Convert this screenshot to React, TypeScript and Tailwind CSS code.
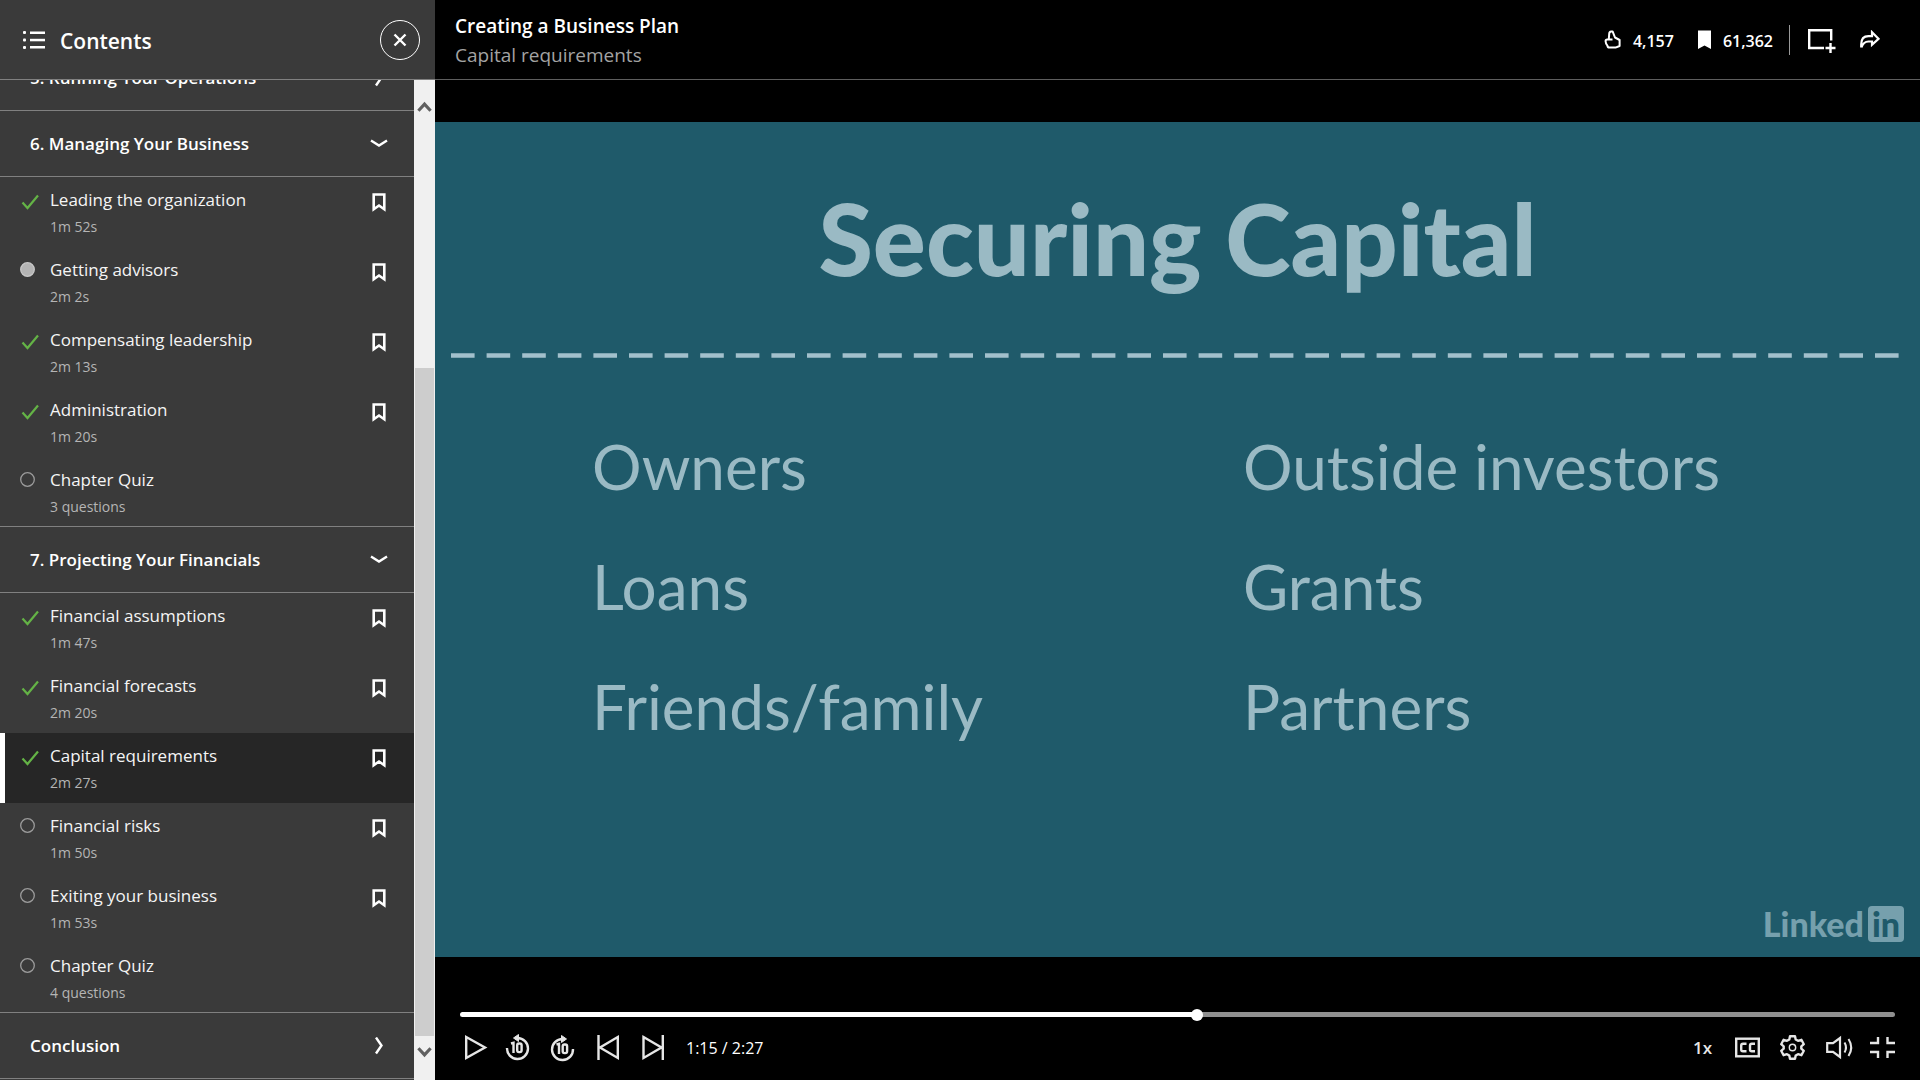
import React, { useState } from "react";

type Status = "done" | "partial" | "none";
type Item = { title: string; meta: string; status: Status; quiz?: boolean };
type Chapter = { title: string; items: Item[] };

const chapters: Chapter[] = [
  { title: "5. Running Your Operations", items: [] },
  {
    title: "6. Managing Your Business",
    items: [
      { title: "Leading the organization", meta: "1m 52s", status: "done" },
      { title: "Getting advisors", meta: "2m 2s", status: "partial" },
      { title: "Compensating leadership", meta: "2m 13s", status: "done" },
      { title: "Administration", meta: "1m 20s", status: "done" },
      { title: "Chapter Quiz", meta: "3 questions", status: "none", quiz: true },
    ],
  },
  {
    title: "7. Projecting Your Financials",
    items: [
      { title: "Financial assumptions", meta: "1m 47s", status: "done" },
      { title: "Financial forecasts", meta: "2m 20s", status: "done" },
      { title: "Capital requirements", meta: "2m 27s", status: "done" },
      { title: "Financial risks", meta: "1m 50s", status: "none" },
      { title: "Exiting your business", meta: "1m 53s", status: "none" },
      { title: "Chapter Quiz", meta: "4 questions", status: "none", quiz: true },
    ],
  },
  { title: "Conclusion", items: [] },
];

function StatusMark({ status }: { status: Status }) {
  return (
    <svg width="50" height="40" viewBox="0 0 50 40" fill="none" className="shrink-0" aria-hidden="true">
      {status === "done" ? (
        <path d="M22.5 25.5 L27.5 31 L38 18.5" stroke="#64b346" strokeWidth="2.2" />
      ) : (
        <circle
          cx="27.5"
          cy="22.5"
          r="6.8"
          stroke={status === "partial" ? "#c8c8c8" : "#9c9c9c"}
          strokeWidth="1.3"
          fill={status === "partial" ? "#b4b4b4" : "none"}
        />
      )}
    </svg>
  );
}

function Row({ item }: { item: Item }) {
  const current = item.title === "Capital requirements";
  return (
    <li
      className={
        current
          ? "flex h-[70px] items-start bg-[#262626] shadow-[inset_5px_0_0_#fff] last:h-[69px]"
          : "flex h-[70px] items-start last:h-[69px]"
      }
    >
      <StatusMark status={item.status} />
      <a href="#lesson" className="min-w-0 flex-1 pt-[11px]">
        <span className="block text-[17px] leading-6 text-[#f5f5f5]">{item.title}</span>
        <span className="block pt-[3px] text-sm leading-6 text-[#b5b5b5]">{item.meta}</span>
      </a>
      {!item.quiz && (
        <button type="button" aria-label={"Save " + item.title} className="pt-4 pr-7">
          <svg width="14" height="19" viewBox="0 0 14 19" fill="none">
            <path d="M1.7 1.5 H12.3 V16.2 L7 12.5 L1.7 16.2 Z" stroke="#fff" strokeWidth="2.6" />
          </svg>
        </button>
      )}
    </li>
  );
}

function ChapterBlock({ chapter }: { chapter: Chapter }) {
  const open = chapter.items.length > 0;
  return (
    <section>
      <button
        type="button"
        aria-expanded={open}
        className="flex h-[66px] w-full items-center justify-between border-b border-[#808080] pr-[26px] pl-[30px] text-left"
      >
        <span className="text-[17px] leading-6 font-semibold">{chapter.title}</span>
        <svg width="18" height="18" viewBox="0 0 18 18" fill="none" stroke="#fff" strokeWidth="2.4">
          {open ? <path d="M1 5.5 L9 10.5 L17 5.5" /> : <path d="M6 0.5 L11.5 8.5 L6 16.5" />}
        </svg>
      </button>
      {open && (
        <ul className="border-b border-[#808080]">
          {chapter.items.map((it) => (
            <Row key={it.title} item={it} />
          ))}
        </ul>
      )}
    </section>
  );
}

function Scrollbar() {
  return (
    <div className="flex w-[21px] shrink-0 flex-col bg-[#f0f0f0] px-px pb-3">
      <button type="button" aria-label="Scroll up" className="flex h-[54px] items-center justify-center">
        <svg width="15" height="14" viewBox="0 0 16 14" fill="none" stroke="#606060" strokeWidth="3.4">
          <path d="M1.5 11 L8 4 L14.5 11" />
        </svg>
      </button>
      <div className="flex-[234]" />
      <div className="flex-[668] bg-[#cdcdcd]" />
      <button type="button" aria-label="Scroll down" className="flex h-8 items-center justify-center">
        <svg width="15" height="14" viewBox="0 0 16 14" fill="none" stroke="#606060" strokeWidth="3.4">
          <path d="M1.5 3 L8 10 L14.5 3" />
        </svg>
      </button>
    </div>
  );
}

function Sidebar() {
  return (
    <aside className="flex h-screen w-[435px] shrink-0 flex-col bg-[#3a3a3a]">
      <header className="flex h-20 shrink-0 items-center border-b border-[#808080] pr-[15px] pl-[23px]">
        <svg width="22" height="20" viewBox="0 0 22 20" aria-hidden="true" fill="#fff">
          <rect x="0" y="1" width="3" height="3" rx="1" />
          <rect x="0" y="8.5" width="3" height="3" rx="1" />
          <rect x="0" y="16" width="3" height="3" rx="1" />
          <rect x="7" y="1.5" width="15" height="2.5" />
          <rect x="7" y="8.8" width="15" height="2.5" />
          <rect x="7" y="16" width="15" height="2.5" />
        </svg>
        <h2 className="flex-1 pt-0.5 pl-[15px] text-[21px] leading-7 font-semibold">Contents</h2>
        <button
          type="button"
          aria-label="Close contents"
          className="flex size-10 items-center justify-center rounded-full border border-white"
        >
          <svg width="14" height="14" viewBox="0 0 14 14" stroke="#fff" strokeWidth="2.4">
            <path d="M1.5 1.5 L12.5 12.5 M12.5 1.5 L1.5 12.5" />
          </svg>
        </button>
      </header>
      <div className="flex min-h-0 flex-1">
        <nav aria-label="Course contents" className="min-w-0 flex-1 overflow-hidden">
          <div className="-mt-[35px]">
            {chapters.map((c) => (
              <ChapterBlock key={c.title} chapter={c} />
            ))}
          </div>
        </nav>
        <Scrollbar />
      </div>
    </aside>
  );
}

function TopBar() {
  return (
    <header className="flex h-20 shrink-0 items-center border-b border-[#5e5e5e] pr-10 pl-5">
      <div className="flex-1 pt-0.5">
        <h1 className="text-[19px] leading-7 font-semibold">Creating a Business Plan</h1>
        <p className="text-[19px] leading-[30px] text-[#a3a3a3]">Capital requirements</p>
      </div>
      <button type="button" aria-label="Like, 4,157" className="flex items-center gap-3">
        <svg width="17" height="19" viewBox="0 0 17 19" fill="none" stroke="#fff" strokeWidth="2" strokeLinejoin="round">
          <path d="M4.8 9.5 L5.2 3.8 Q5.2 1.5 7.2 1.4 H8.6 L11 7.5 L15.6 10 V16 L11.5 17.6 H5.5 Q3.6 17.6 3.4 15.6 Q1.7 13.8 1.6 11.3 Q1.5 9.6 3.2 9.6 H8.5" />
        </svg>
        <span className="pt-0.5 text-base leading-6 font-semibold">4,157</span>
      </button>
      <button type="button" aria-label="Save, 61,362" className="ml-6 flex items-center gap-3">
        <svg width="13" height="19" viewBox="0 0 13 19" fill="#fff">
          <path d="M0 0.5 H13 V19 L6.5 15.5 L0 19 Z" />
        </svg>
        <span className="pt-0.5 text-base leading-6 font-semibold">61,362</span>
      </button>
      <div className="ml-4 h-[30px] w-px bg-[#9a9a9a]" />
      <button type="button" aria-label="Add to collection" className="ml-[18px]">
        <svg width="28" height="26" viewBox="0 0 28 26" fill="none" stroke="#fff" strokeWidth="2.4">
          <path d="M16 21 H1.2 V3.2 H23.2 V13.5" />
          <path d="M22.5 16 V26 M17.5 21 H27.5" />
        </svg>
      </button>
      <button type="button" aria-label="Share" className="ml-6">
        <svg width="20" height="19" viewBox="0 0 20 19" fill="none" stroke="#fff" strokeWidth="2.2">
          <path d="M1.2 17.5 V14.5 Q1.2 6.2 8.5 6.2 H12 V2.2 L18.5 8.8 L12 14.8 V11.5 H8.5 Q3.5 11.5 1.4 17.5" />
        </svg>
      </button>
    </header>
  );
}

function Slide() {
  return (
    <section className="flex aspect-video w-full flex-col bg-[#1f5a6a] font-['Lato',sans-serif] text-[#9abac4]">
      <h2 className="pt-14 text-center text-[99px] leading-[120px] font-black whitespace-nowrap">Securing Capital</h2>
      <svg className="mt-[55px] h-[5px] w-full px-4" aria-hidden="true">
        <line x1="0" y1="2.5" x2="100%" y2="2.5" stroke="#a2c0cc" strokeWidth="4.5" strokeDasharray="23.6 12" />
      </svg>
      <div className="grid flex-1 grid-cols-[651px_1fr] content-start pt-12 pl-[157px] text-[62px] leading-[120px] whitespace-nowrap">
        <p>Owners</p>
        <p>Outside investors</p>
        <p>Loans</p>
        <p>Grants</p>
        <p>Friends/family</p>
        <p>Partners</p>
      </div>
      <div className="flex items-center justify-end gap-1 pr-4 pb-[15px] text-[#76a0ad]">
        <span className="text-[34px] leading-9 font-black">Linked</span>
        <span className="flex size-9 items-center justify-center rounded-sm bg-[#76a0ad] text-[34px] leading-9 font-black text-[#1f5a6a]">
          in
        </span>
      </div>
    </section>
  );
}

function Control({ label, children }: { label: string; children: React.ReactNode }) {
  return (
    <button type="button" aria-label={label}>
      <svg width="45" height="40" viewBox="0 0 45 40" fill="none" stroke="#e6e6e6" strokeWidth="2.4">
        {children}
      </svg>
    </button>
  );
}

function Ten({ x }: { x: number }) {
  return (
    <g strokeWidth="2.4">
      <path d={`M${x - 5.5} 16.5 L${x - 3} 15.8 V26`} />
      <rect x={x + 0.7} y="16.5" width="4.4" height="8.6" rx="1.8" />
    </g>
  );
}

function Controls() {
  const [position, setPosition] = useState(514);
  return (
    <footer className="pt-[55px]">
      <div className="flex px-[25px]">
        <input
          type="range"
          aria-label="Seek"
          min={0}
          max={1000}
          value={position}
          onChange={(e) => setPosition(Number(e.target.value))}
          style={{ backgroundSize: `${position / 10}% 100%` }}
          className="h-[5px] w-full appearance-none rounded-sm bg-[#8f8f8f] bg-[linear-gradient(#fff,#fff)] bg-no-repeat [&::-webkit-slider-thumb]:size-3 [&::-webkit-slider-thumb]:appearance-none [&::-webkit-slider-thumb]:rounded-full [&::-webkit-slider-thumb]:bg-white"
        />
      </div>
      <div className="flex items-center pt-[10px] pr-[15px] pl-[18px]">
        <Control label="Play">
          <path d="M13.2 10 L32 20.5 L13.2 31 Z" />
        </Control>
        <Control label="Back 10 seconds">
          <path d="M9 21 A 10.5 10.5 0 1 0 19.5 11" />
          <path d="M20.5 7.5 V14.5 L15.5 11 Z" fill="#e6e6e6" strokeWidth="1" />
          <Ten x={18.5} />
        </Control>
        <Control label="Forward 10 seconds">
          <path d="M30 22 A 10.5 10.5 0 1 1 19.5 12" />
          <path d="M18.5 8.5 V15.5 L23.5 12 Z" fill="#e6e6e6" strokeWidth="1" />
          <g transform="translate(0 1)">
            <Ten x={19} />
          </g>
        </Control>
        <Control label="Previous">
          <path d="M10.5 8 V33 M29.8 10 L12 20.5 L29.8 31 Z" />
        </Control>
        <Control label="Next">
          <path d="M29.8 8 V33 M10.5 10 L28.5 20.5 L10.5 31 Z" />
        </Control>
        <span className="flex-1 pt-0.5 pl-2 text-base leading-6">1:15 / 2:27</span>
        <button type="button" aria-label="Playback speed" className="w-[45px] pt-0.5 text-center text-[17px] leading-6 font-semibold text-[#e6e6e6]">
          1x
        </button>
        <Control label="Captions">
          <rect x="11.2" y="11.7" width="22.6" height="17.6" />
          <path d="M21.5 16.7 H18 Q16.2 16.7 16.2 18.5 V22.5 Q16.2 24.3 18 24.3 H21.5 M30 16.7 H26.8 Q25 16.7 25 18.5 V22.5 Q25 24.3 26.8 24.3 H30" />
        </Control>
        <Control label="Settings">
          <path
            strokeLinejoin="round"
            d="M20 9.2 H25 L25.7 12.5 L28 13.8 L31.4 12.8 L33.8 17.2 L31.3 19.3 V21.7 L33.8 23.8 L31.4 28.2 L28 27.2 L25.7 28.5 L25 31.8 H20 L19.3 28.5 L17 27.2 L13.6 28.2 L11.2 23.8 L13.7 21.7 V19.3 L11.2 17.2 L13.6 12.8 L17 13.8 L19.3 12.5 Z"
          />
          <circle cx="22.5" cy="20.5" r="3.2" strokeWidth="1.4" />
        </Control>
        <Control label="Volume">
          <path d="M12.2 16.2 H18 L25 11 V30 L18 24.8 H12.2 Z" strokeWidth="2.2" />
          <path d="M29.5 15.5 Q32.5 20.5 29.5 25.5 M33.5 12 Q39 20.5 33.5 29" strokeWidth="2" />
        </Control>
        <Control label="Exit full screen">
          <path d="M10 16 H18 V10 M35 16 H27.5 V10 M10 25 H18 V31 M35 25 H27.5 V31" />
        </Control>
      </div>
    </footer>
  );
}

export default function App() {
  return (
    <div className="flex h-screen overflow-hidden bg-black font-['Open_Sans',sans-serif] text-white">
      <Sidebar />
      <main className="flex min-w-0 flex-1 flex-col">
        <TopBar />
        <div className="pt-[42px]">
          <Slide />
        </div>
        <Controls />
      </main>
    </div>
  );
}
